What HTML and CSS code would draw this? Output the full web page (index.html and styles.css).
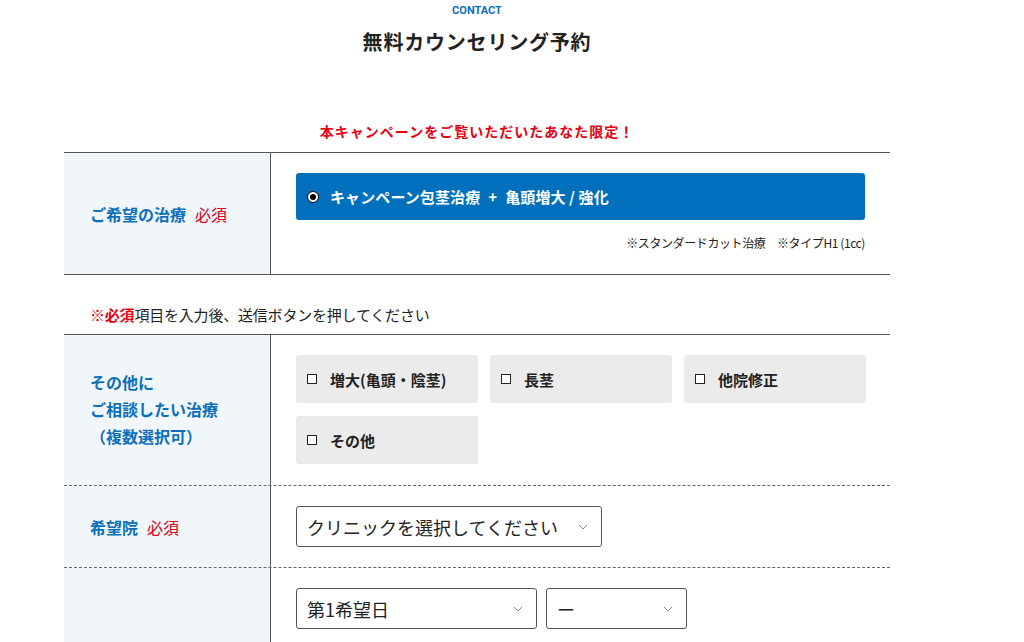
FILE: index.html
```html
<!DOCTYPE html>
<html lang="ja">

<head>
    <meta charset="UTF-8">
    <meta name="viewport" content="width=device-width, initial-scale=1">
    <title>無料カウンセリング予約</title>
    <link rel="stylesheet" href="styles.css">
</head>

<body>
    <div class="wrap">
        <div class="heading">
            <p class="heading_en">CONTACT</p>
            <h1>無料カウンセリング予約</h1>
        </div>

        <p class="campaign">本キャンペーンをご覧いただいたあなた限定！</p>

        <div class="form_table first">
            <div class="row">
                <div class="label">ご希望の治療<span class="req">必須</span></div>
                <div class="field">
                    <label class="plan">
                        <span class="radio"></span>
                        キャンペーン包茎治療<span class="plus">+</span>亀頭増大 / 強化
                    </label>
                    <p class="plan_note">※スタンダードカット治療　※タイプH1 (1cc)</p>
                </div>
            </div>
        </div>

        <p class="notice"><span>※必須</span>項目を入力後、送信ボタンを押してください</p>

        <div class="form_table">
            <div class="row dashed">
                <div class="label multi">その他に<br>ご相談したい治療<br>（複数選択可）</div>
                <div class="field">
                    <div class="checks">
                        <label class="check"><span class="box"></span>増大(亀頭・陰茎)</label>
                        <label class="check"><span class="box"></span>長茎</label>
                        <label class="check"><span class="box"></span>他院修正</label>
                        <label class="check"><span class="box"></span>その他</label>
                    </div>
                </div>
            </div>

            <div class="row dashed">
                <div class="label">希望院<span class="req">必須</span></div>
                <div class="field">
                    <div class="select clinic">
                        <select>
                            <option>クリニックを選択してください</option>
                        </select>
                        <svg class="arrow" width="10" height="6" viewBox="0 0 10 6"><path d="M1 1l4 4 4-4" fill="none" stroke="#888" stroke-width="1"/></svg>
                    </div>
                </div>
            </div>

            <div class="row">
                <div class="label"></div>
                <div class="field">
                    <div class="dates">
                        <div class="select date">
                            <select>
                                <option>第1希望日</option>
                            </select>
                            <svg class="arrow" width="10" height="6" viewBox="0 0 10 6"><path d="M1 1l4 4 4-4" fill="none" stroke="#888" stroke-width="1"/></svg>
                        </div>
                        <div class="select time">
                            <select>
                                <option>ー</option>
                            </select>
                            <svg class="arrow" width="10" height="6" viewBox="0 0 10 6"><path d="M1 1l4 4 4-4" fill="none" stroke="#888" stroke-width="1"/></svg>
                        </div>
                    </div>
                </div>
            </div>
        </div>
    </div>
</body>

</html>
```

FILE: styles.css
```css
*{
    padding: 0px;
    margin: 0px;
    box-sizing: border-box;
    font-family: "Noto Sans CJK JP", "Noto Sans", sans-serif;
}

body{
    background-color: #fff;
    color: #222;
}

.wrap{
    width: 826px;
    margin-left: 64px;
}

.heading{
    text-align: center;
}

.heading_en{
    font-family: Roboto, "Liberation Sans", sans-serif;
    font-size: 11px;
    font-weight: bold;
    color: #0b6fbe;
    line-height: 20px;
    padding-top: 1px;
}

h1{
    font-size: 20px;
    font-weight: bold;
    letter-spacing: 0.8px;
    line-height: 30px;
    margin-top: 6px;
    color: #222;
}

.campaign{
    margin-top: 64px;
    text-align: center;
    color: #e60012;
    font-size: 14px;
    font-weight: bold;
    letter-spacing: 1px;
    line-height: 20px;
}

.form_table{
    border-top: 1px solid #555;
}

.form_table.first{
    margin-top: 11px;
    border-bottom: 1px solid #555;
}

.row{
    display: grid;
    grid-template-columns: 207px 1fr;
}

.row.dashed{
    border-bottom: 1px dashed #666;
}

.label{
    background-color: #f1f6fb;
    border-right: 1px solid #555;
    color: #0b6fbe;
    font-size: 16px;
    font-weight: bold;
    padding-left: 26px;
    display: flex;
    align-items: center;
}

.label.multi{
    line-height: 27px;
    padding-bottom: 1px;
}

.req{
    color: #e60012;
    font-weight: normal;
    margin-left: 9px;
}

.field{
    padding: 20px 25px 20px 25px;
}

.plan{
    display: flex;
    align-items: center;
    height: 47px;
    background-color: #0070bd;
    border-radius: 3px;
    color: #fff;
    font-size: 15px;
    font-weight: bold;
    letter-spacing: 0.1px;
    padding-left: 11px;
}

.plus{
    margin: 0 8px;
}

.radio{
    width: 12px;
    height: 12px;
    border-radius: 50%;
    background-color: #fff;
    border: 1px solid #000;
    margin-right: 11px;
    position: relative;
}

.radio::after{
    content: "";
    position: absolute;
    left: 2px;
    top: 2px;
    width: 6px;
    height: 6px;
    border-radius: 50%;
    background-color: #000;
}

.plan_note{
    text-align: right;
    font-size: 12px;
    line-height: 18px;
    letter-spacing: -0.4px;
    margin-top: 14px;
    margin-bottom: 2px;
    color: #222;
}

.notice{
    font-size: 15px;
    line-height: 20px;
    letter-spacing: -0.2px;
    padding-left: 26px;
    margin-top: 30px;
    margin-bottom: 9px;
}

.notice span{
    color: #e60012;
    font-weight: bold;
}

.checks{
    display: grid;
    grid-template-columns: repeat(3, 182px);
    column-gap: 12px;
    row-gap: 13px;
    padding-bottom: 1px;
}

.check{
    display: flex;
    align-items: center;
    height: 48px;
    background-color: #ebebeb;
    border-radius: 3px;
    padding-left: 11px;
    font-size: 15px;
    font-weight: bold;
    color: #222;
}

.box{
    width: 10px;
    height: 10px;
    border: 1px solid #222;
    background-color: #fff;
    margin-right: 13px;
}

.select{
    position: relative;
}

.select select{
    appearance: none;
    -webkit-appearance: none;
    width: 100%;
    height: 41px;
    border: 1px solid #555;
    border-radius: 3px;
    background-color: #fff;
    font-size: 18px;
    color: #222;
    padding-left: 10px;
}

.arrow{
    position: absolute;
    right: 14px;
    top: 18px;
}

.clinic{
    width: 306px;
}

.dates{
    display: flex;
    gap: 9px;
}

.date{
    width: 241px;
}

.time{
    width: 141px;
}
```
